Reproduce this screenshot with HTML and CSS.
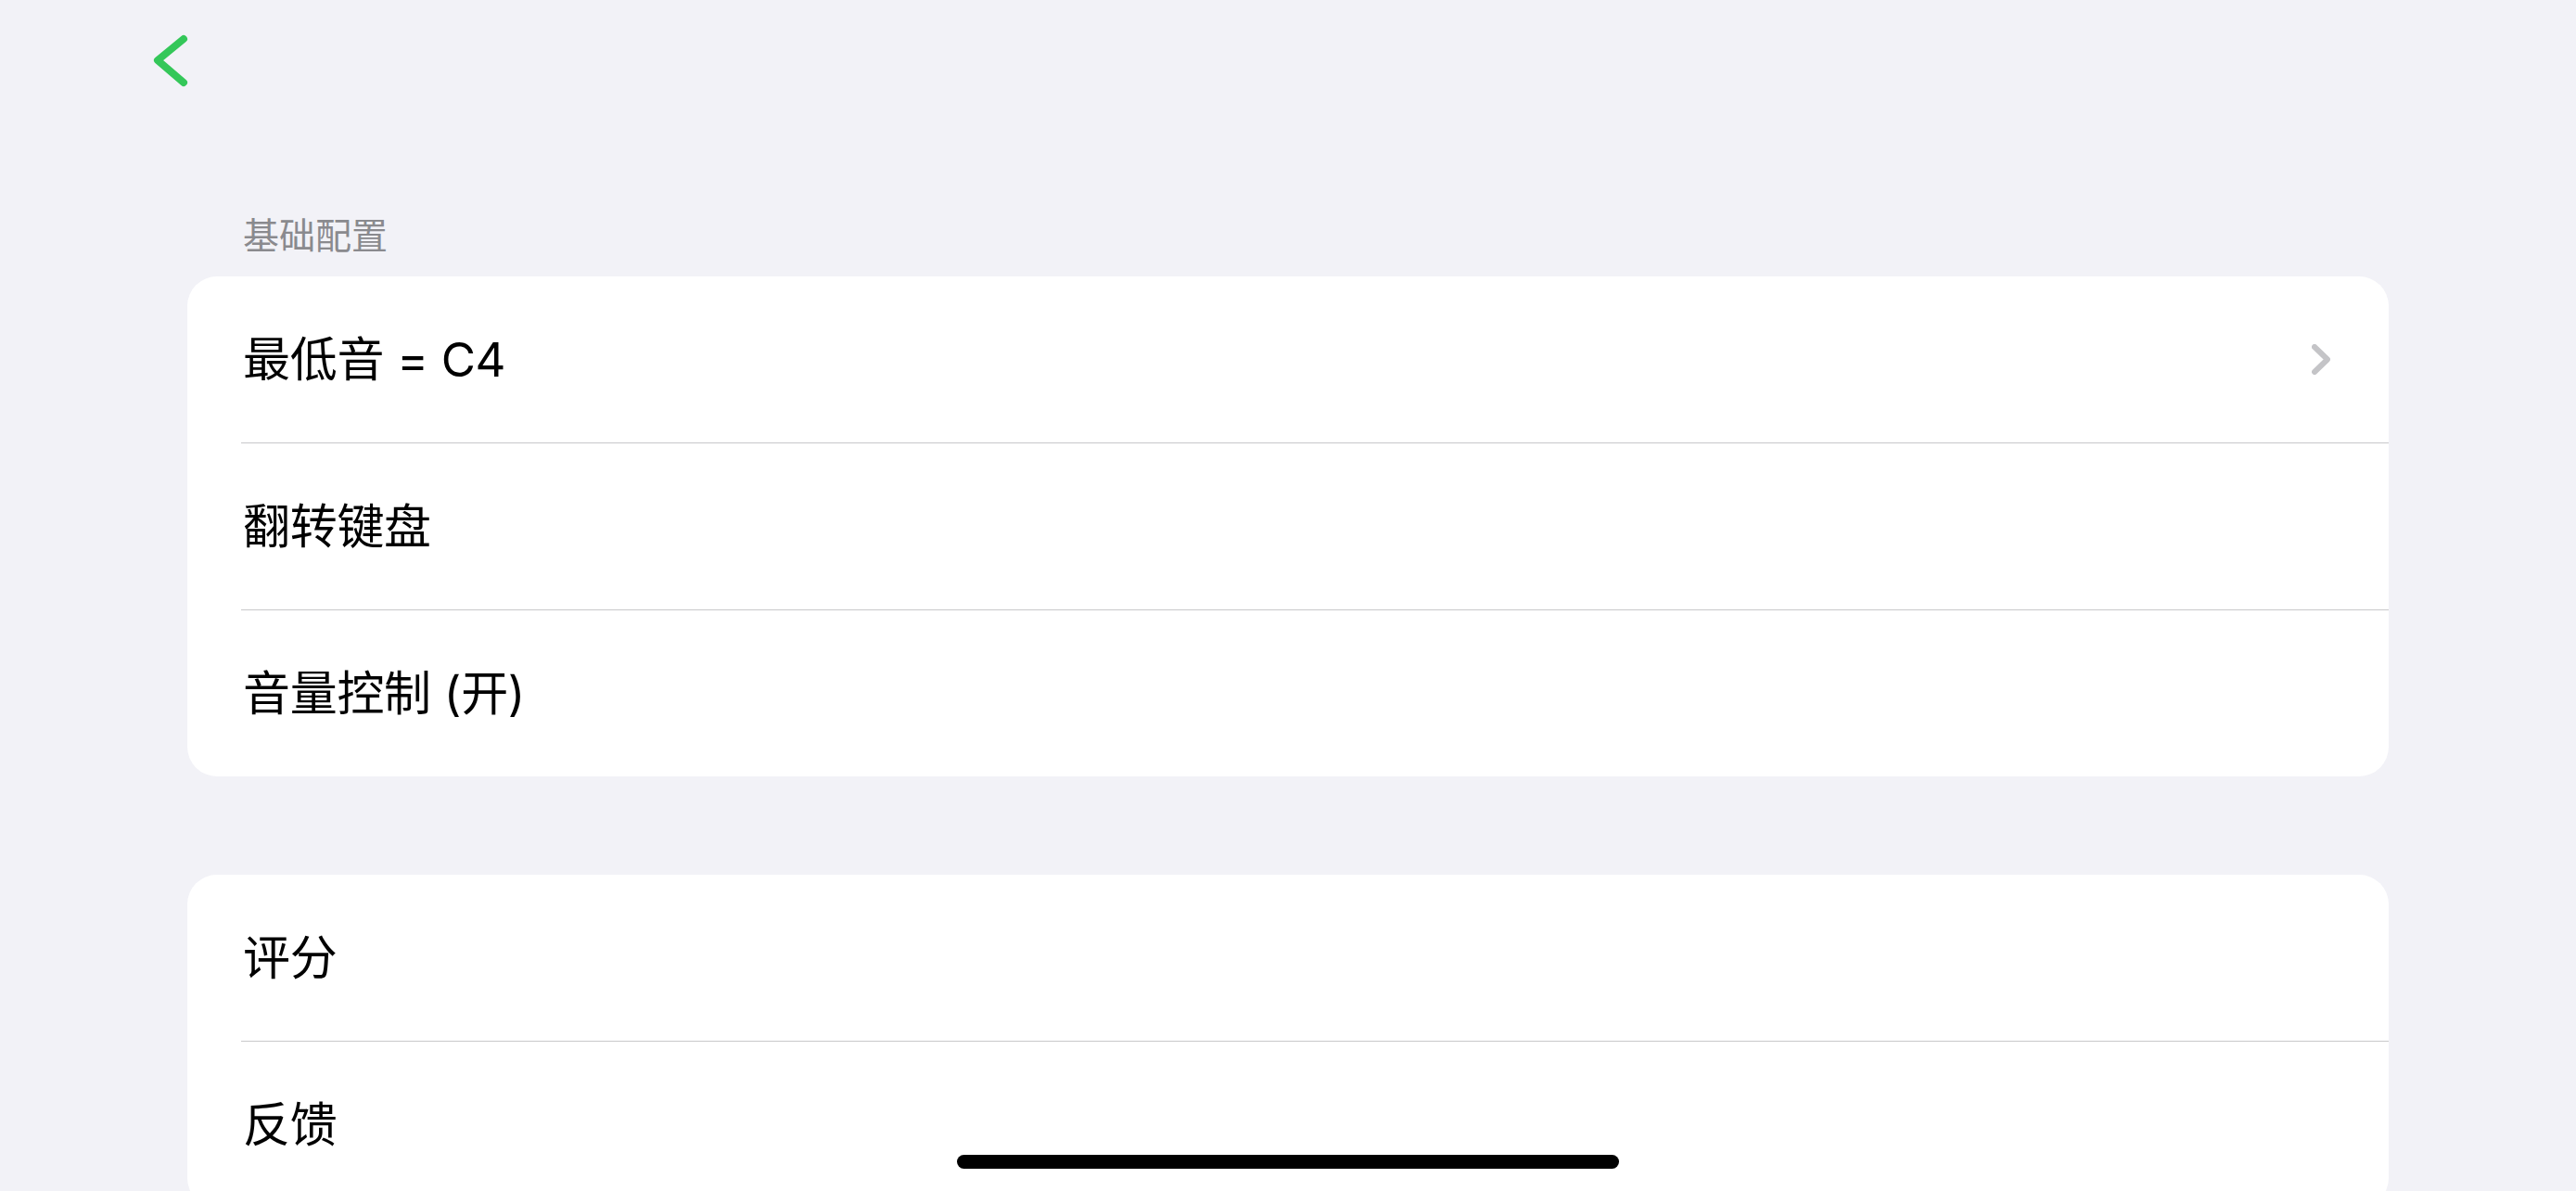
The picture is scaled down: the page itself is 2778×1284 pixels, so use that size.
FILE: index.html
```html
<!DOCTYPE html>
<html lang="zh-CN">
<head>
<meta charset="utf-8">
<title>设置</title>
<link rel="stylesheet" href="styles.css">
</head>
<body>
<div class="screen">
  <nav class="nav">
    <button class="back" aria-label="返回">
      <svg class="back-icon" width="44" height="60" viewBox="0 0 44 60">
        <polyline points="38,6 10,29 38,53" fill="none" stroke="#34C759" stroke-width="8" stroke-linecap="round" stroke-linejoin="round"/>
      </svg>
    </button>
  </nav>
  <main class="content">
    <div class="section-title">基础配置</div>
    <section class="card">
      <div class="row">
        <div class="row-inner">
          <span class="label">最低音 = C4</span>
          <svg class="disclosure" width="20" height="33" viewBox="0 0 20 33">
            <polyline points="3,3 17,16.5 3,30" fill="none" stroke="#C4C4C7" stroke-width="6" stroke-linecap="round" stroke-linejoin="round"/>
          </svg>
        </div>
      </div>
      <div class="row">
        <div class="row-inner">
          <span class="label">翻转键盘</span>
        </div>
      </div>
      <div class="row">
        <div class="row-inner">
          <span class="label">音量控制 (开)</span>
        </div>
      </div>
    </section>
    <section class="card card-second">
      <div class="row">
        <div class="row-inner">
          <span class="label">评分</span>
        </div>
      </div>
      <div class="row">
        <div class="row-inner">
          <span class="label">反馈</span>
        </div>
      </div>
    </section>
  </main>
  <div class="home-indicator"></div>
</div>
</body>
</html>
```
FILE: styles.css
```css
html, body {
  margin: 0;
  padding: 0;
  height: 1284px;
  overflow: hidden;
}

body {
  background: #F2F2F7;
  font-family: "Inter", "Noto Sans CJK SC", sans-serif;
  color: #000;
}

.screen {
  width: 2778px;
  height: 1284px;
  overflow: hidden;
}

.nav {
  height: 96px;
  padding-left: 160px;
  padding-top: 36px;
  box-sizing: border-box;
}

.back {
  display: block;
  padding: 0;
  margin: 0;
  border: 0;
  background: none;
  width: 44px;
  height: 60px;
}

.back-icon {
  display: block;
}

.content {
  padding: 0 202px;
}

.section-title {
  margin-top: 134px;
  margin-bottom: 21px;
  padding-left: 60px;
  font-size: 39px;
  line-height: 47px;
  color: #8A8A8E;
}

.card {
  background: #FFFFFF;
  border-radius: 32px;
  overflow: hidden;
}

.card-second {
  margin-top: 106px;
}

.row {
  padding-left: 58px;
}

.row-inner {
  height: 179px;
  display: flex;
  align-items: center;
  justify-content: space-between;
  padding-right: 63px;
  border-bottom: 1px solid #C8C8CA;
}

.row:last-child .row-inner {
  border-bottom: 0;
}

.label {
  font-size: 51px;
  line-height: 62px;
  padding-left: 2px;
  letter-spacing: -0.3px;
}

.disclosure {
  display: block;
}

.home-indicator {
  position: fixed;
  left: 50%;
  bottom: 24px;
  width: 714px;
  height: 15px;
  margin-left: -357px;
  border-radius: 8px;
  background: #000;
}
```
